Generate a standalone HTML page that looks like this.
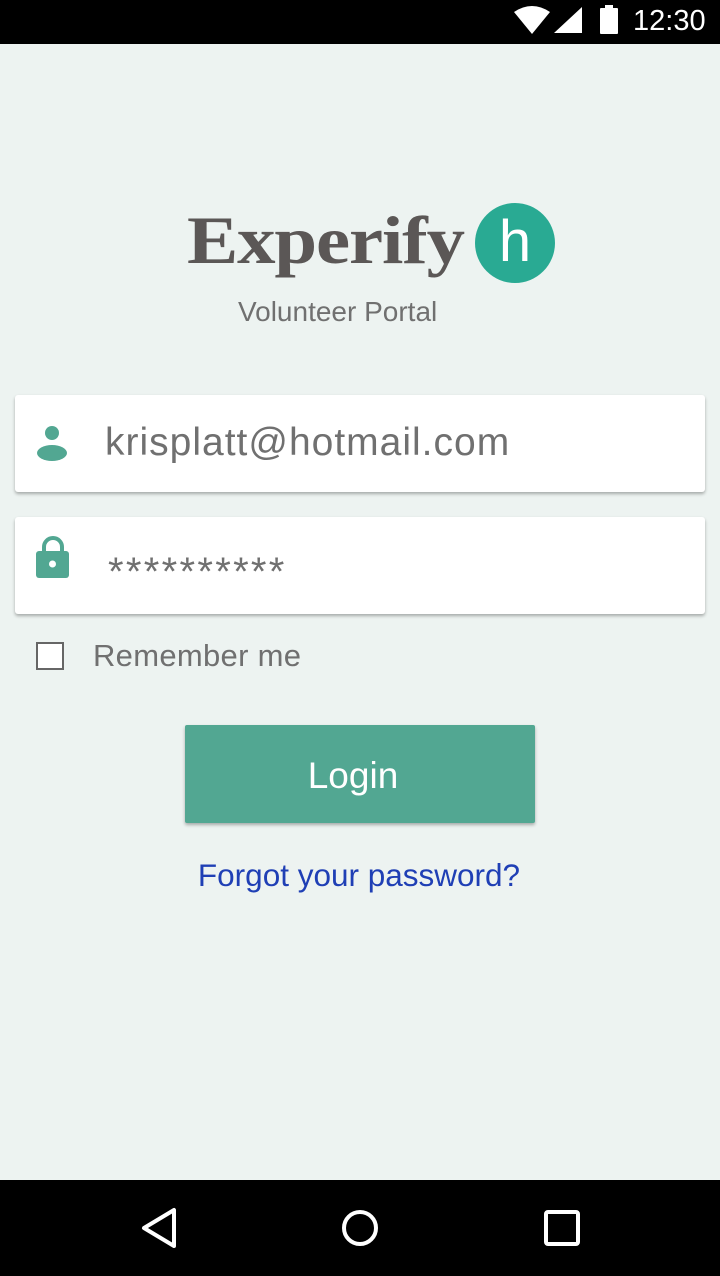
<!DOCTYPE html>
<html><head><meta charset="utf-8"><style>
*{margin:0;padding:0;box-sizing:border-box}
body{width:720px;height:1276px;background:#edf3f1;font-family:"Liberation Sans",sans-serif;position:relative;overflow:hidden}
.abs{position:absolute}
.status{left:0;top:0;width:720px;height:44px;background:#000}
.nav{left:0;top:1180px;width:720px;height:96px;background:#000}
.card{left:15px;width:690px;height:97px;background:#fff;border-radius:3px;box-shadow:0 2px 3px rgba(0,0,0,.3)}
.txt{color:#707070;font-size:37px}
</style></head><body>
<div class="abs status">
<svg class="abs" style="left:514px;top:6px" width="36" height="28" viewBox="0 0 36 28"><path d="M0 6 Q18 -6 36 6 L18 28Z" fill="#fff"/></svg>
<svg class="abs" style="left:554px;top:7px" width="28" height="26"><path d="M28 0V26H0Z" fill="#fff"/></svg>
<div class="abs" style="left:600px;top:8px;width:18px;height:26px;background:#fff;border-radius:1px"></div>
<div class="abs" style="left:605px;top:5px;width:8px;height:4px;background:#fff"></div>
<div class="abs" style="left:633px;top:5px;color:#fff;font-size:29px">12:30</div>
</div>
<div class="abs" style="left:187px;top:201px;font-family:'Liberation Serif',serif;font-weight:bold;font-size:68px;color:#5b5756;letter-spacing:-1px;transform:scaleX(1.13);transform-origin:left top">Experify</div>
<div class="abs" style="left:475px;top:203px;width:80px;height:80px;border-radius:50%;background:#29aa93;color:#fff;font-size:58px;text-align:center;line-height:78px">h</div>
<div class="abs" style="left:238px;top:296px;font-size:28px;color:#707070">Volunteer Portal</div>
<div class="abs card" style="top:395px"></div>
<svg class="abs" style="left:36px;top:426px" width="32" height="36"><circle cx="16" cy="7" r="7" fill="#52a792"/><ellipse cx="16" cy="27" rx="15" ry="8" fill="#52a792"/></svg>
<div class="abs txt" style="left:105px;top:421px;font-size:39px;letter-spacing:1px">krisplatt@hotmail.com</div>
<div class="abs card" style="top:517px"></div>
<svg class="abs" style="left:36px;top:536px" width="34" height="44"><path d="M8 16V11a9 9 0 0 1 18 0V16" stroke="#52a792" stroke-width="4" fill="none"/><rect x="0" y="15" width="33" height="27" rx="3" fill="#52a792"/><circle cx="16.5" cy="28" r="3.5" fill="#fff"/></svg>
<div class="abs txt" style="left:108px;top:550px;font-size:40px;letter-spacing:2.3px">**********</div>
<div class="abs" style="left:36px;top:642px;width:28px;height:28px;border:2px solid #666;background:#fff"></div>
<div class="abs" style="left:93px;top:638px;font-size:31px;letter-spacing:0.3px;color:#707070">Remember me</div>
<div class="abs" style="left:185px;top:725px;width:350px;height:98px;background:#52a792;border-radius:2px;box-shadow:0 2px 3px rgba(0,0,0,.3);color:#fff;font-size:37px;text-align:center;line-height:102px;padding-right:14px">Login</div>
<div class="abs" style="left:0;width:718px;top:857px;text-align:center;font-size:31.5px;color:#1f3fb5">Forgot your password?</div>
<div class="abs nav">
<svg class="abs" style="left:140px;top:27px" width="40" height="42"><path d="M34 3V39L4 21Z" stroke="#fff" stroke-width="4" fill="none" stroke-linejoin="round"/></svg>
<div class="abs" style="left:342px;top:30px;width:36px;height:36px;border:4px solid #fff;border-radius:50%"></div>
<div class="abs" style="left:544px;top:30px;width:36px;height:36px;border:4px solid #fff;border-radius:4px"></div>
</div>
</body></html>
